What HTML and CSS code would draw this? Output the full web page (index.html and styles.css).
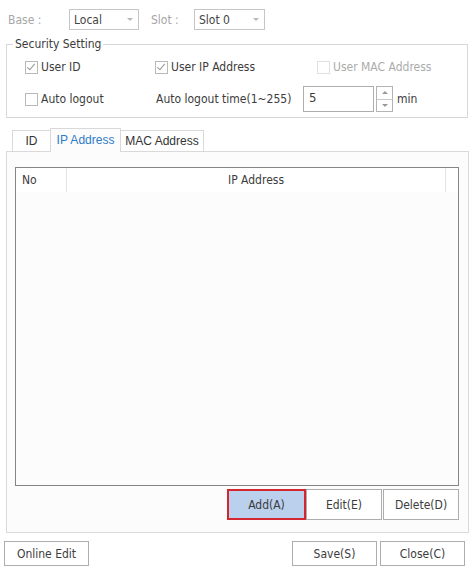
FILE: index.html
```html
<!DOCTYPE html>
<html lang="en">
<head>
  <meta charset="UTF-8" />
  <title>Security Setting</title>
  <link rel="stylesheet" href="styles.css">
</head>
<body>
  <div class="top-row">
    <span class="dim-label base-label">Base :</span>
    <div class="combo base-combo"><span>Local</span><i class="caret"></i></div>
    <span class="dim-label slot-label">Slot :</span>
    <div class="combo slot-combo"><span>Slot 0</span><i class="caret"></i></div>
  </div>

  <fieldset class="security">
    <legend>Security Setting</legend>
    <div class="sec-row first">
      <label class="check col-1"><span class="box checked"></span>User ID</label>
      <label class="check col-2"><span class="box checked"></span>User IP Address</label>
      <label class="check col-3 disabled"><span class="box"></span>User MAC Address</label>
    </div>
    <div class="sec-row second">
      <label class="check col-1"><span class="box"></span>Auto logout</label>
      <div class="logout-time">
        <span class="time-label">Auto logout time(1~255)</span>
        <div class="num-input">5</div>
        <div class="spin">
          <span class="spin-up"></span>
          <span class="spin-down"></span>
        </div>
        <span class="unit">min</span>
      </div>
    </div>
  </fieldset>

  <div class="tabs">
    <div class="tab">ID</div>
    <div class="tab active">IP Address</div>
    <div class="tab">MAC Address</div>
  </div>
  <div class="tab-panel">
    <div class="list">
      <div class="list-head">
        <div class="col-no">No</div>
        <div class="col-ip">IP Address</div>
        <div class="col-end"></div>
      </div>
      <div class="list-body"></div>
    </div>
    <div class="list-actions">
      <button class="btn btn-action selected">Add(A)</button>
      <button class="btn btn-action">Edit(E)</button>
      <button class="btn btn-action">Delete(D)</button>
    </div>
  </div>

  <div class="footer">
    <button class="btn btn-foot">Online Edit</button>
    <div class="footer-right">
      <button class="btn btn-foot">Save(S)</button>
      <button class="btn btn-foot">Close(C)</button>
    </div>
  </div>
</body>
</html>
```

FILE: styles.css
```css
body {
  margin: 0;
  background: #ffffff;
  color: #3c3c3c;
  font-family: "DejaVu Sans Condensed", "DejaVu Sans", sans-serif;
  font-size: 12px;
  width: 470px;
}

/* base / slot selector */
.top-row {
  display: flex;
  align-items: center;
  height: 21px;
  padding: 9px 0 0 8px;
}
.dim-label {
  color: #a6a6a6;
}
.base-label { width: 61px; }
.slot-label { width: 43px; margin-left: 12px; }
.combo {
  box-sizing: border-box;
  height: 21px;
  border: 1px solid #c6c6c6;
  display: flex;
  align-items: center;
  justify-content: space-between;
  padding: 0 5px 0 4px;
  color: #444;
}
.base-combo { width: 70px; }
.slot-combo { width: 71px; }
.caret {
  width: 0;
  height: 0;
  border-left: 3px solid transparent;
  border-right: 3px solid transparent;
  border-top: 3px solid #b8b8b8;
}

/* security group */
.security {
  margin: 7px 2px 0 6px;
  padding: 0 0 5px 0;
  border: 1px solid #d8d8d8;
  min-width: 0;
}
.security legend {
  margin-left: 6px;
  padding: 0 2px;
  line-height: 14px;
}
.sec-row {
  display: flex;
  align-items: center;
  padding-left: 18px;
}
.sec-row.first { height: 24px; margin-top: 4px; }
.sec-row.second { height: 26px; margin-top: 7px; }
.col-1 { width: 130px; }
.col-2 { width: 162px; }
.check {
  display: flex;
  align-items: center;
  gap: 3px;
}
.check.disabled { color: #ababab; }
.box {
  box-sizing: border-box;
  width: 13px;
  height: 13px;
  border: 1px solid #b9b9b9;
  background: #fff;
  display: inline-block;
  position: relative;
}
.check.disabled .box { border-color: #e0e0e0; }
.box.checked::after {
  content: "";
  position: absolute;
  left: 3px;
  top: 0px;
  width: 3px;
  height: 7px;
  border-right: 1.5px solid #969696;
  border-bottom: 1.5px solid #969696;
  transform: rotate(40deg);
}
.logout-time {
  display: flex;
  align-items: center;
  height: 26px;
}
.time-label {
  width: 148px;
  padding-left: 1px;
  box-sizing: border-box;
}
.num-input {
  box-sizing: border-box;
  width: 71px;
  height: 26px;
  border: 1px solid #adadad;
  padding: 3px 0 0 5px;
  font-size: 13px;
}
.spin {
  box-sizing: border-box;
  margin-left: 2px;
  width: 17px;
  height: 26px;
  border: 1px solid #b4b4b4;
  display: flex;
  flex-direction: column;
}
.spin span {
  flex: 1;
  display: flex;
  align-items: center;
  justify-content: center;
}
.spin-up { border-bottom: 1px solid #c8c8c8; }
.spin-up::after {
  content: "";
  border-left: 3px solid transparent;
  border-right: 3px solid transparent;
  border-bottom: 3px solid #9a9a9a;
}
.spin-down::after {
  content: "";
  border-left: 3px solid transparent;
  border-right: 3px solid transparent;
  border-top: 3px solid #9a9a9a;
}
.unit { margin-left: 4px; }

/* tabs */
.tabs {
  display: flex;
  align-items: flex-end;
  height: 23px;
  margin-top: 10px;
  padding-left: 12px;
  font-family: "Liberation Sans", Arial, sans-serif;
  font-size: 12px;
  position: relative;
  z-index: 1;
}
.tab {
  box-sizing: border-box;
  height: 21px;
  border: 1px solid #d9d9d9;
  border-bottom: none;
  background: #ffffff;
  display: flex;
  align-items: center;
  justify-content: center;
  color: #333;
}
.tab:nth-child(1) { width: 38px; border-right: none; }
.tab:nth-child(3) { width: 83px; border-left: none; }
.tab.active {
  width: 71px;
  height: 24px;
  margin-bottom: -1px;
  background: #fcfcfc;
  color: #2f7bc7;
  padding-bottom: 1px;
}
.tab-panel {
  margin: 0 1px 0 6px;
  border: 1px solid #d9d9d9;
  background: #fcfcfc;
  padding: 15px 9px 12px 8px;
}

/* ip list */
.list {
  border: 1px solid #858585;
  height: 317px;
  display: flex;
  flex-direction: column;
  background: #fcfcfc;
}
.list-head {
  display: flex;
  height: 24px;
  background: #ffffff;
}
.list-head > div {
  display: flex;
  align-items: center;
}
.col-no {
  box-sizing: border-box;
  width: 51px;
  padding-left: 6px;
  border-right: 1px solid #e3e3e3;
}
.col-ip {
  flex: 1;
  justify-content: center;
  border-right: 1px solid #e3e3e3;
}
.col-end { width: 12px; }
.list-body { flex: 1; }

.list-actions {
  display: flex;
  justify-content: flex-end;
  gap: 1px;
  margin-top: 3px;
}

/* buttons */
.btn {
  box-sizing: border-box;
  font-family: "DejaVu Sans Condensed", "DejaVu Sans", sans-serif;
  font-size: 12px;
  color: #3c3c3c;
  background: #ffffff;
  border: 1px solid #adadad;
  border-radius: 0;
  padding: 0;
}
.btn-action {
  width: 76px;
  height: 31px;
}
.btn-action.selected {
  width: 79px;
  margin-right: -1px;
  border: 2px solid #d32630;
  background: #bad0ec;
}
.footer {
  display: flex;
  justify-content: space-between;
  margin-top: 8px;
  padding: 0 5px 0 4px;
}
.footer-right {
  display: flex;
  gap: 3px;
}
.btn-foot {
  width: 85px;
  height: 25px;
}
```
